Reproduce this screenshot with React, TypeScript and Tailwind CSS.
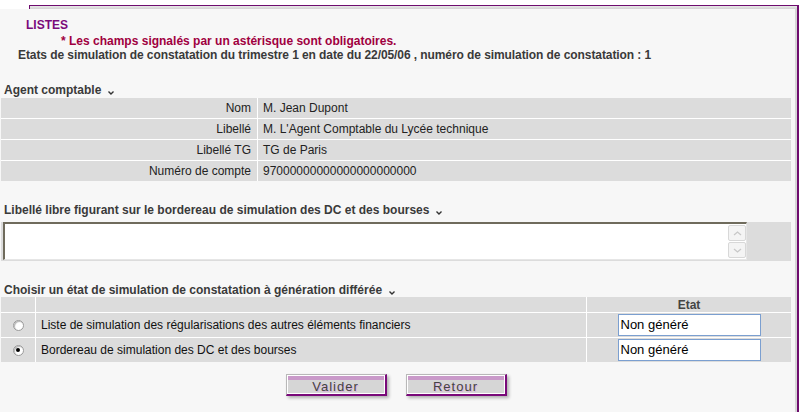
import { useState } from "react";

const Chevron = () => (
  <svg width="6" height="4" viewBox="0 0 6 4" className="ml-[7px] mt-[5px] inline-block">
    <path d="M0.5 0.5 L3 3 L5.5 0.5" fill="none" stroke="#333" strokeWidth="1.4" />
  </svg>
);

const SectionTitle = ({ children, className = "" }: { children: string; className?: string }) => (
  <div className={`h-[14px] leading-[14px] pl-[4px] flex items-center font-bold text-[#3a3a3a] ${className}`}>
    <span>{children}</span>
    <Chevron />
  </div>
);

const Radio = ({ checked, onClick }: { checked: boolean; onClick: () => void }) => (
  <span
    onClick={onClick}
    className="w-[11px] h-[11px] rounded-full border border-[#9a9a9a] bg-white shadow-[inset_1px_1px_1px_#b5b5b5] flex items-center justify-center cursor-pointer"
  >
    {checked && <span className="w-[4px] h-[4px] rounded-full bg-black" />}
  </span>
);

const Button = ({ label }: { label: string }) => (
  <button className="w-[101px] h-[22px] border-t border-l border-[#b8b8b8] border-b-2 border-r-2 border-b-[#7a0a7a] border-r-[#7a0a7a] shadow-[2px_2px_3px_#b0b0b0] p-0">
    <div className="h-full border border-white bg-[#d6d6d6] flex flex-col">
      <div className="h-[4px] bg-[#c999c9]" />
      <div className="flex-1 flex items-center justify-center text-[13px] leading-[13px] tracking-[1px] text-[#444] [text-shadow:1px_1px_0_#dcb4dc]">
        {label}
      </div>
    </div>
  </button>
);

const agent = [
  ["Nom", "M. Jean Dupont"],
  ["Libellé", "M. L'Agent Comptable du Lycée technique"],
  ["Libellé TG", "TG de Paris"],
  ["Numéro de compte", "97000000000000000000000"],
];

const etats = [
  "Liste de simulation des régularisations des autres éléments financiers",
  "Bordereau de simulation des DC et des bourses",
];

const App = () => {
  const [selected, setSelected] = useState(1);

  return (
    <div className="w-[802px] h-[412px] bg-white flex flex-col overflow-hidden font-['Liberation_Sans',Arial,sans-serif] text-[12px]">
      <div className="h-[9px] pt-[5px] pl-[29px] pr-[3px] shrink-0">
        <div className="h-[4px] border-t border-l border-r-2 border-[#6e0c6e] bg-gradient-to-b from-[#e8e8e8] to-[#d2d2d2]" />
      </div>
      <div className="flex-1 flex">
        <div className="flex-1 bg-[#f7f7f7] border-r-2 border-[#d6d6d6] pr-[2px]">
          <div className="mt-[9px] h-[14px] leading-[14px] pl-[26px] font-bold text-[#7b0a7b]">LISTES</div>
          <div className="mt-[2px] h-[14px] leading-[14px] pl-[61px] font-bold text-[#a0003f]">
            * Les champs signalés par un astérisque sont obligatoires.
          </div>
          <div className="h-[14px] leading-[14px] pl-[18px] font-bold text-[#3a3a3a] tracking-[-0.08px]">
            Etats de simulation de constatation du trimestre 1 en date du 22/05/06 , numéro de simulation de constatation : 1
          </div>

          <SectionTitle className="mt-[21px]">Agent comptable</SectionTitle>
          <div className="ml-px mt-px w-[790px] grid grid-cols-[256px_1fr] gap-px bg-white">
            {agent.map(([k, v]) => (
              <div key={k} className="contents">
                <div className="h-[20px] bg-[#dcdcdc] flex items-center justify-end pr-[6px] text-[#222]">{k}</div>
                <div className="h-[20px] bg-[#dcdcdc] flex items-center pl-[5px] text-[#222]">{v}</div>
              </div>
            ))}
          </div>

          <SectionTitle className="mt-[22px]">
            Libellé libre figurant sur le bordereau de simulation des DC et des bourses
          </SectionTitle>
          <div className="ml-px mt-[5px] w-[790px] h-[39px] bg-[#dcdcdc] pl-[2px] pt-0">
            <div className="w-[744px] h-[38px] bg-white border-t-2 border-l-2 border-t-[#6f6b5c] border-l-[#6f6b5c] border-b border-r border-b-[#e6e6e6] border-r-[#e6e6e6] flex justify-end">
              <div className="w-[18px] flex flex-col gap-px py-px">
                <div className="flex-1 border border-[#d8d8d8] rounded-[2px] bg-[#f4f4f4] flex items-center justify-center">
                  <svg width="9" height="5" viewBox="0 0 9 5">
                    <path d="M1 4 L4.5 1 L8 4" fill="none" stroke="#c8c8c8" strokeWidth="1.3" />
                  </svg>
                </div>
                <div className="flex-1 border border-[#d8d8d8] rounded-[2px] bg-[#f4f4f4] flex items-center justify-center">
                  <svg width="9" height="5" viewBox="0 0 9 5">
                    <path d="M1 1 L4.5 4 L8 1" fill="none" stroke="#c8c8c8" strokeWidth="1.3" />
                  </svg>
                </div>
              </div>
            </div>
          </div>

          <SectionTitle className="mt-[22px]">
            Choisir un état de simulation de constatation à génération différée
          </SectionTitle>
          <div className="ml-px w-[790px] grid grid-cols-[34px_550px_1fr] gap-px bg-white">
            <div className="h-[15px] bg-[#dcdcdc]" />
            <div className="h-[15px] bg-[#dcdcdc]" />
            <div className="h-[15px] bg-[#dcdcdc] flex items-center justify-center font-bold text-[#444]">Etat</div>
            {etats.map((label, i) => (
              <div key={label} className="contents">
                <div className="h-[24px] bg-[#dcdcdc] flex items-center justify-center">
                  <Radio checked={selected === i} onClick={() => setSelected(i)} />
                </div>
                <div className="h-[24px] bg-[#dcdcdc] flex items-center pl-[5px] text-[#111]">{label}</div>
                <div className="h-[24px] bg-[#dcdcdc] flex items-center justify-center">
                  <div className="w-[143px] h-[22px] bg-white border border-[#7b9fd0] flex items-center pl-[2px] text-[13px] text-black">
                    Non généré
                  </div>
                </div>
              </div>
            ))}
          </div>

          <div className="w-[792px] mt-[12px] flex justify-center gap-[19px]">
            <Button label="Valider" />
            <Button label="Retour" />
          </div>
        </div>
        <div className="w-[2px] bg-[#6e0c6e]" />
        <div className="w-[3px] bg-white" />
      </div>
    </div>
  );
};

export default App;
